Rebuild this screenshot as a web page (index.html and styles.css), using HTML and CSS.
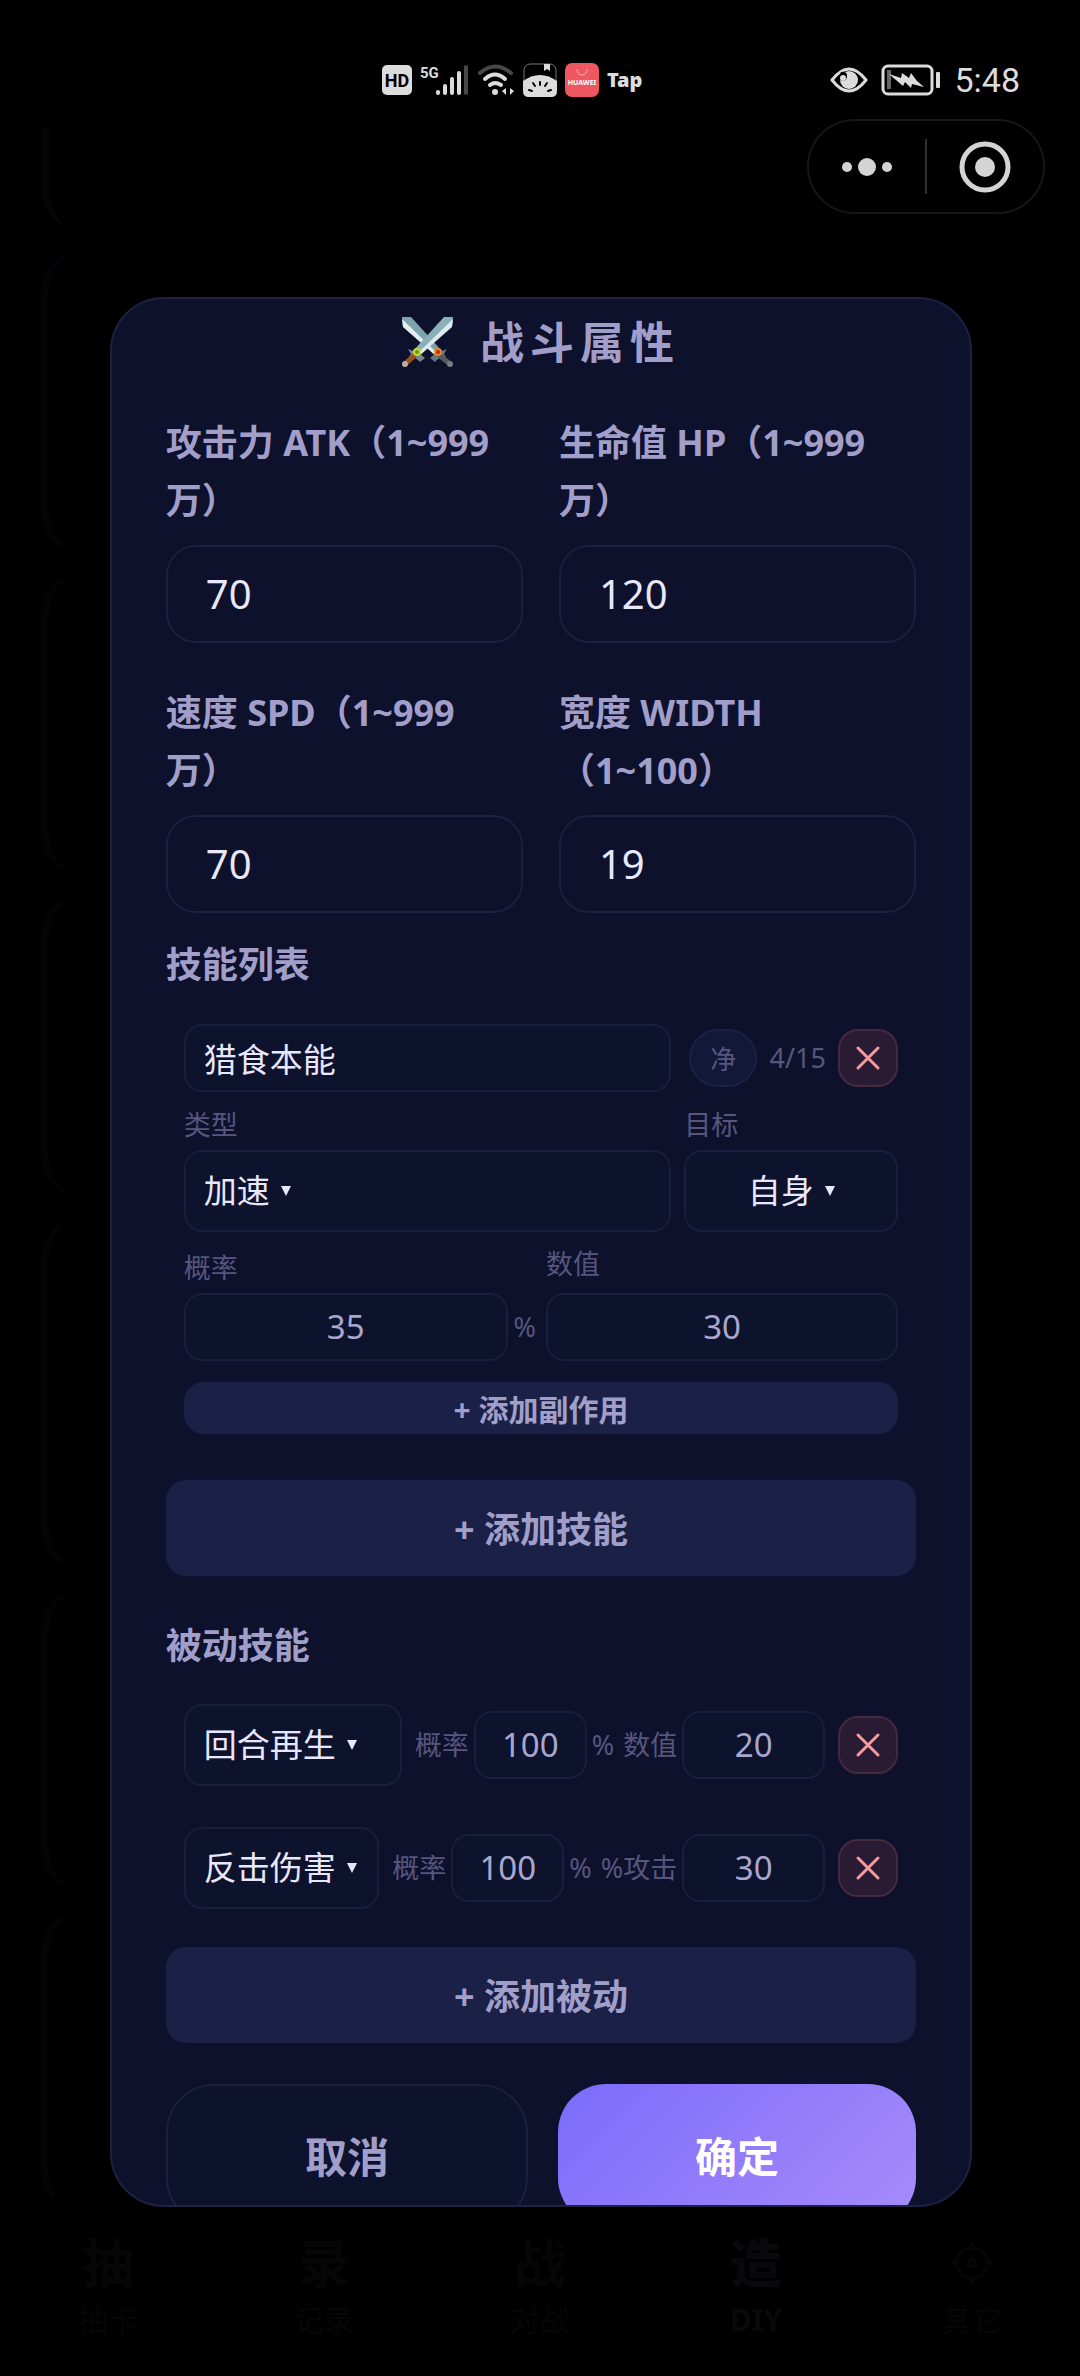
FILE: index.html
```html
<!DOCTYPE html>
<html lang="zh-CN">
<head>
<meta charset="utf-8">
<meta name="viewport" content="width=device-width, initial-scale=1">
<title>战斗属性</title>
<link rel="stylesheet" href="styles.css">
</head>
<body>
<div class="app">
  <header class="status">
    <div class="status-group">
      <svg viewBox="0 0 30 30" width="30" height="30"><rect width="30" height="30" rx="5" fill="#dcdcdc"/><text class="glyphs" x="15" y="22" text-anchor="middle" font-size="18" font-weight="700" fill="#000">HD</text></svg>
      <svg viewBox="0 0 49 32" width="49" height="32"><text class="glyphs" x="0" y="14" font-size="15" font-weight="700" fill="#dcdcdc">5G</text><g stroke-width="4" stroke-linecap="round" stroke="#dcdcdc"><path d="M18 28v1M25 22v7M32 15v14M39 9v20"/><path d="M46 3v26" stroke="#484848"/></g></svg>
      <svg viewBox="0 0 38 32" width="38" height="32" fill="none" stroke-width="4" stroke-linecap="round"><path d="M3 9Q18-4 34 9" stroke="#484848"/><path d="M8 15Q18 6 28 15M13 21Q18 17 24 21" stroke="#dcdcdc"/><circle cx="18" cy="28" r="3" fill="#dcdcdc"/><path d="M29 24v7l-4-4zM33 24v7l4-4z" fill="#dcdcdc" stroke="none"/></svg>
      <svg viewBox="0 0 34 34" width="34" height="34"><rect x="1" y="1" width="32" height="32" rx="6" fill="#000" stroke="#777"/><path d="M0 18Q17 6 34 18v10q0 6-6 6H6q-6 0-6-6z" fill="#dcdcdc"/><path d="M21 1h6v7l-3-2-3 2z" fill="#dcdcdc"/><path d="M17 19v3M10 20l2 3M24 20l-2 3M6 27l3 1M28 27l-3 1" stroke="#000" stroke-width="2" stroke-linecap="round"/></svg>
      <svg viewBox="0 0 34 34" width="34" height="34"><rect width="34" height="34" rx="7" fill="#ee5660"/><path d="M12 6q0 6 5 6t5-6" fill="none" stroke="#ffb0b0"/><text x="17" y="22" text-anchor="middle" font-size="7" font-weight="700" fill="#fff">HUAWEI</text></svg>
      <span class="tap">Tap</span>
    </div>
    <div class="status-group status-right">
      <svg viewBox="0 0 38 26" width="38" height="26"><path d="M2 13Q19-9 36 13Q19 35 2 13z" fill="none" stroke="#dcdcdc" stroke-width="3"/><circle cx="19" cy="13" r="9" fill="#dcdcdc"/><path d="M11 5q6-1 6 4t-5 5l-4-2z" fill="#000"/><circle cx="13" cy="11" r="3" fill="#dcdcdc"/></svg>
      <svg viewBox="0 0 60 32" width="60" height="32"><rect x="2" y="2" width="49" height="28" rx="5" fill="none" stroke="#dcdcdc" stroke-width="3"/><rect x="55" y="8" width="4" height="16" rx="1" fill="#dcdcdc"/><rect x="6" y="6" width="4" height="19" fill="#666"/><path d="M8 10l12 4 1-5 7 5 2-5 6 8 7 6-12-3-1 4-6-6-2 4z" fill="#dcdcdc"/></svg>
      <time class="clock">5:48</time>
    </div>
  </header>

  <div class="capsule">
    <button class="capsule-btn" aria-label="更多"><svg viewBox="0 0 50 18" width="50" height="18" fill="#d4d4d4"><circle cx="5" cy="9" r="5"/><circle cx="25" cy="9" r="9"/><circle cx="45" cy="9" r="5"/></svg></button>
    <button class="capsule-btn" aria-label="关闭小程序"><svg viewBox="0 0 52 52" width="52" height="52"><circle cx="26" cy="26" r="23" fill="none" stroke="#d4d4d4" stroke-width="5"/><circle cx="26" cy="26" r="10" fill="#d4d4d4"/></svg></button>
  </div>

  <div class="page">
    <div class="feed" aria-hidden="true">
      <div class="post post-gold"></div><div class="post post-blue"></div><div class="post"></div><div class="post"></div><div class="post post-tall"></div><div class="post"></div><div class="post"></div>
    </div>
    <nav class="tabs">
      <a class="tab" href="#draw"><b>抽</b>抽卡</a>
      <a class="tab" href="#log"><b>录</b>记录</a>
      <a class="tab" href="#fight"><b>战</b>对战</a>
      <a class="tab tab-on" href="#diy"><b>造</b>DIY</a>
      <a class="tab" href="#more"><b><svg viewBox="0 0 48 48" width="46" height="46" fill="none" stroke="currentColor" stroke-width="4"><circle cx="24" cy="24" r="16"/><circle cx="24" cy="24" r="4"/><path d="M24 2v6M24 40v6M2 24h6M40 24h6"/></svg></b>其它</a>
    </nav>

    <div class="overlay">
      <form class="dialog" role="dialog" aria-labelledby="title" onsubmit="return false">
        <h1 class="title" id="title">
          <svg viewBox="0 0 51 50" width="51" height="50"><path d="M0 0h9l31 34-6 5L1 9z" fill="#7fa3ad"/><path d="M0 2l1 8 33 29 2-2z" fill="#e3f0f1"/><path d="M28 41q5-3 7-11l5 4 5-2-3 5 2 3q-7 0-11 5z" fill="#68757e"/><path d="M38 39l9 7" stroke="#555a60" stroke-width="5" stroke-linecap="round"/><circle cx="36" cy="35" r="4" fill="#e08a2c"/><circle cx="36" cy="35" r="2" fill="#c22a12"/><path d="M51 0h-9L11 34l6 5L50 9z" fill="#8bb0b8"/><path d="M51 2l-1 8-33 29-2-2z" fill="#dcebed"/><path d="M23 41q-5-3-7-11l-5 4-5-2 3 5-2 3q7 0 11 5z" fill="#78868f"/><path d="M12 39l-8 7" stroke="#9c4f1f" stroke-width="5" stroke-linecap="round"/><circle cx="3" cy="47" r="3" fill="#b9b0a8"/><circle cx="48" cy="47" r="3" fill="#777c84"/><circle cx="15" cy="35" r="4" fill="#c8d832"/><circle cx="15" cy="35" r="2" fill="#5f9a1c"/></svg>
          <span class="title-text">战斗属性</span>
        </h1>

        <div class="stats">
          <div class="stat"><label class="label" for="atk">攻击力 ATK（1~999万）</label><input class="big-input" id="atk" value="70"></div>
          <div class="stat"><label class="label" for="hp">生命值 HP（1~999万）</label><input class="big-input" id="hp" value="120"></div>
          <div class="stat"><label class="label" for="spd">速度 SPD（1~999万）</label><input class="big-input" id="spd" value="70"></div>
          <div class="stat"><label class="label" for="width">宽度 WIDTH（1~100）</label><input class="big-input" id="width" value="19"></div>
        </div>

        <h2 class="label section">技能列表</h2>
        <div class="skill">
          <div class="skill-grid">
            <input class="input" aria-label="技能名称" value="猎食本能">
            <div class="tools">
              <button type="button" class="clean">净</button>
              <span class="hint">4/15</span>
              <button type="button" class="remove" aria-label="删除技能"><svg viewBox="0 0 24 24" width="24" height="24"><path d="M2 2l20 20M22 2L2 22"/></svg></button>
            </div>
          </div>
          <div class="skill-grid types">
            <div class="col"><label class="hint" for="type">类型</label><span class="picker"><select id="type"><option>加速</option></select><svg class="arrow" viewBox="0 0 10 10" width="10" height="10"><path d="M0 0h10L5 10z"/></svg></span></div>
            <div class="col"><label class="hint" for="target">目标</label><span class="picker picker-center"><select id="target"><option>自身</option></select><svg class="arrow" viewBox="0 0 10 10" width="10" height="10"><path d="M0 0h10L5 10z"/></svg></span></div>
          </div>
          <div class="values">
            <div class="col"><label class="hint" for="rate">概率</label><span class="with-unit"><input class="input num" id="rate" value="35"><span class="hint">%</span></span></div>
            <div class="col col-loose"><label class="hint" for="amount">数值</label><input class="input num" id="amount" value="30"></div>
          </div>
          <button type="button" class="add add-small">+ 添加副作用</button>
        </div>
        <button type="button" class="add">+ 添加技能</button>

        <h2 class="label section section-passive">被动技能</h2>
        <div class="passives">
          <div class="passive">
            <span class="picker picker-grow"><select aria-label="被动类型"><option>回合再生</option></select><svg class="arrow" viewBox="0 0 10 10" width="10" height="10"><path d="M0 0h10L5 10z"/></svg></span>
            <span class="pair"><label class="hint" for="p1r">概率</label><input class="input num rate" id="p1r" value="100"><span class="hint">%</span></span>
            <span class="pair"><label class="hint" for="p1v">数值</label><input class="input num amount" id="p1v" value="20"></span>
            <button type="button" class="remove" aria-label="删除被动"><svg viewBox="0 0 24 24" width="24" height="24"><path d="M2 2l20 20M22 2L2 22"/></svg></button>
          </div>
          <div class="passive">
            <span class="picker picker-grow"><select aria-label="被动类型"><option>反击伤害</option></select><svg class="arrow" viewBox="0 0 10 10" width="10" height="10"><path d="M0 0h10L5 10z"/></svg></span>
            <span class="pair"><label class="hint" for="p2r">概率</label><input class="input num rate" id="p2r" value="100"><span class="hint">%</span></span>
            <span class="pair"><label class="hint" for="p2v">%攻击</label><input class="input num amount" id="p2v" value="30"></span>
            <button type="button" class="remove" aria-label="删除被动"><svg viewBox="0 0 24 24" width="24" height="24"><path d="M2 2l20 20M22 2L2 22"/></svg></button>
          </div>
        </div>
        <button type="button" class="add">+ 添加被动</button>

        <div class="actions">
          <button type="button" class="action cancel">取消</button>
          <button type="submit" class="action confirm">确定</button>
        </div>
      </form>
    </div>
  </div>
</div>
</body>
</html>
```

FILE: styles.css
```css
* { box-sizing: border-box; }

body {
  margin: 0;
  background: #000;
  color: #e9e7fc;
  font-family: "Noto Sans", "Noto Sans CJK SC", sans-serif;
}

button, input, select { font-family: inherit; margin: 0; outline: none; }
button { cursor: pointer; padding: 0; }
svg { display: block; flex: none; overflow: visible; }

.app {
  display: flex;
  flex-direction: column;
  height: 100vh;
  position: relative;
}

/* System status bar */
.status {
  display: flex;
  justify-content: flex-end;
  align-items: center;
  gap: 188px;
  height: 128px;
  padding: 32px 60px 0 0;
  color: #dcdcdc;
}
.status-group { display: flex; align-items: center; gap: 8px; }
.status-right { gap: 13px; }
.glyphs { font-family: Roboto, sans-serif; }
.tap { font-size: 20px; font-weight: 900; line-height: 30px; }
.clock { font-family: Roboto, sans-serif; font-size: 34px; line-height: 40px; }

/* Mini program capsule, floats over the page */
.capsule {
  position: absolute;
  z-index: 3;
  top: 119px;
  right: 35px;
  display: flex;
  width: 238px;
  height: 95px;
  padding: 18px 0;
  border: 2px solid #161616;
  border-radius: 48px;
}
.capsule-btn {
  flex: 1;
  display: flex;
  align-items: center;
  justify-content: center;
  border: 0;
  background: none;
}
.capsule-btn + .capsule-btn { border-left: 2px solid #303030; }

.page {
  flex: 1;
  min-height: 0;
  position: relative;
  display: flex;
  flex-direction: column;
  overflow: hidden;
}

/* Dimmed page behind the dialog */
.feed {
  flex: 1;
  min-height: 0;
  overflow: hidden;
  display: flex;
  flex-direction: column;
  gap: 22px;
  padding-left: 41px;
}
.post {
  flex: none;
  height: 300px;
  border-left: 8px solid #040405;
  border-radius: 40px;
}
.post-gold { height: 102px; border-color: #070401; border-radius: 0 0 40px 40px; }
.post-blue { border-color: #030408; }
.post-tall { height: 350px; }
.tabs { display: flex; height: 180px; padding-top: 30px; }
.tab {
  flex: 1;
  display: flex;
  flex-direction: column;
  align-items: center;
  color: #060606;
  font-size: 30px;
  line-height: 42px;
  text-decoration: none;
}
.tab b {
  display: flex;
  align-items: center;
  height: 73px;
  font-size: 52px;
}
.tab-on { color: #09090c; font-weight: 700; }

.overlay {
  position: absolute;
  inset: 0;
  display: flex;
  align-items: center;
  justify-content: center;
  padding-left: 2px;
}

.dialog {
  width: 80%;
  max-height: 85%;
  padding: 13px 54px 54px;
  overflow: hidden;
  background: #0d112c;
  border: 2px solid #1d2142;
  border-radius: 54px;
}

.title {
  display: flex;
  align-items: center;
  justify-content: center;
  gap: 27px;
  margin: 0 0 42px;
  color: #a19fca;
  font-size: 44px;
  line-height: 60px;
}
.title-text { letter-spacing: 6px; }

.label {
  display: block;
  margin: 0;
  color: #a19fca;
  font-size: 36px;
  font-weight: 700;
  line-height: 58px;
  text-spacing-trim: space-all;
}

.stats {
  display: grid;
  grid-template-columns: 1fr 1fr;
  gap: 41px 36px;
}
.stat { display: flex; flex-direction: column; gap: 15px; min-width: 0; }
.stat .label { padding-right: 18px; }
.big-input {
  width: 100%;
  height: 98px;
  padding: 0 38px;
  border: 2px solid #1b1f40;
  border-radius: 30px;
  background: #0d112c;
  color: #e9e7fc;
  font-size: 40px;
}

.section { margin-top: 23px; }
.section-passive { margin-top: 41px; }

.input {
  width: 100%;
  min-width: 0;
  height: 68px;
  padding: 0 18px;
  border: 2px solid #191d3e;
  border-radius: 18px;
  background: #0d122d;
  color: #e9e7fc;
  font-size: 33px;
}
.num { padding: 0; color: #a9a7ce; text-align: center; }

.hint {
  color: #58557f;
  font-size: 27px;
  line-height: 38px;
  white-space: nowrap;
}

.skill { padding: 30px 18px 0; margin-bottom: 46px; }
.skill-grid {
  display: grid;
  grid-template-columns: 1fr 214px;
  gap: 13px;
}
.types { margin: 14px 0 13px; }
.tools {
  display: flex;
  align-items: center;
  justify-content: space-between;
  padding-left: 5px;
}
.clean {
  width: 68px;
  height: 58px;
  border: 2px solid #1a2145;
  border-radius: 29px;
  background: #111838;
  color: #58557f;
  font-size: 26px;
}
.remove {
  flex: none;
  display: flex;
  align-items: center;
  justify-content: center;
  width: 60px;
  height: 58px;
  border: 2px solid #46283f;
  border-radius: 20px;
  background: #291b34;
}
.remove path { stroke: #f59b9f; stroke-width: 3; stroke-linecap: round; }

.col { display: flex; flex-direction: column; gap: 6px; min-width: 0; }
.col-loose { gap: 10px; }
.values {
  display: grid;
  grid-template-columns: 1fr 1fr;
  align-items: end;
  gap: 10px;
  margin-bottom: 21px;
}
.with-unit { display: flex; align-items: center; gap: 6px; }

.picker {
  display: flex;
  align-items: center;
  gap: 11px;
  height: 82px;
  padding: 0 18px;
  border: 2px solid #191d3e;
  border-radius: 18px;
  background: #0d122d;
}
.picker-center { justify-content: center; }
.picker-grow { flex: 1; margin-right: 4px; }
.picker select {
  appearance: none;
  padding: 0;
  border: 0;
  background: none;
  color: #e9e7fc;
  font-size: 33px;
}
.arrow { fill: #e9e7fc; }

.add {
  display: block;
  width: 100%;
  height: 96px;
  border: 0;
  border-radius: 20px;
  background: #1b2146;
  color: #a19fca;
  font-size: 36px;
  font-weight: 700;
}
.add-small { height: 52px; font-size: 30px; }

.passives {
  display: flex;
  flex-direction: column;
  gap: 41px;
  padding: 29px 18px 38px;
}
.passive { display: flex; align-items: center; gap: 9px; }
.passive .remove { margin-left: 4px; }
.pair { display: flex; align-items: center; gap: 5px; }
.rate { width: 113px; }
.amount { width: 143px; }

.actions { display: flex; gap: 30px; margin-top: 41px; }
.action {
  flex: 1;
  height: 142px;
  border: 0;
  border-radius: 48px;
  font-size: 42px;
  font-weight: 700;
}
.cancel { border: 2px solid #1b1f40; background: #0d122d; color: #a19fca; }
.confirm { background: linear-gradient(135deg, #7c6cfa, #a78bfa); color: #fff; }
```
